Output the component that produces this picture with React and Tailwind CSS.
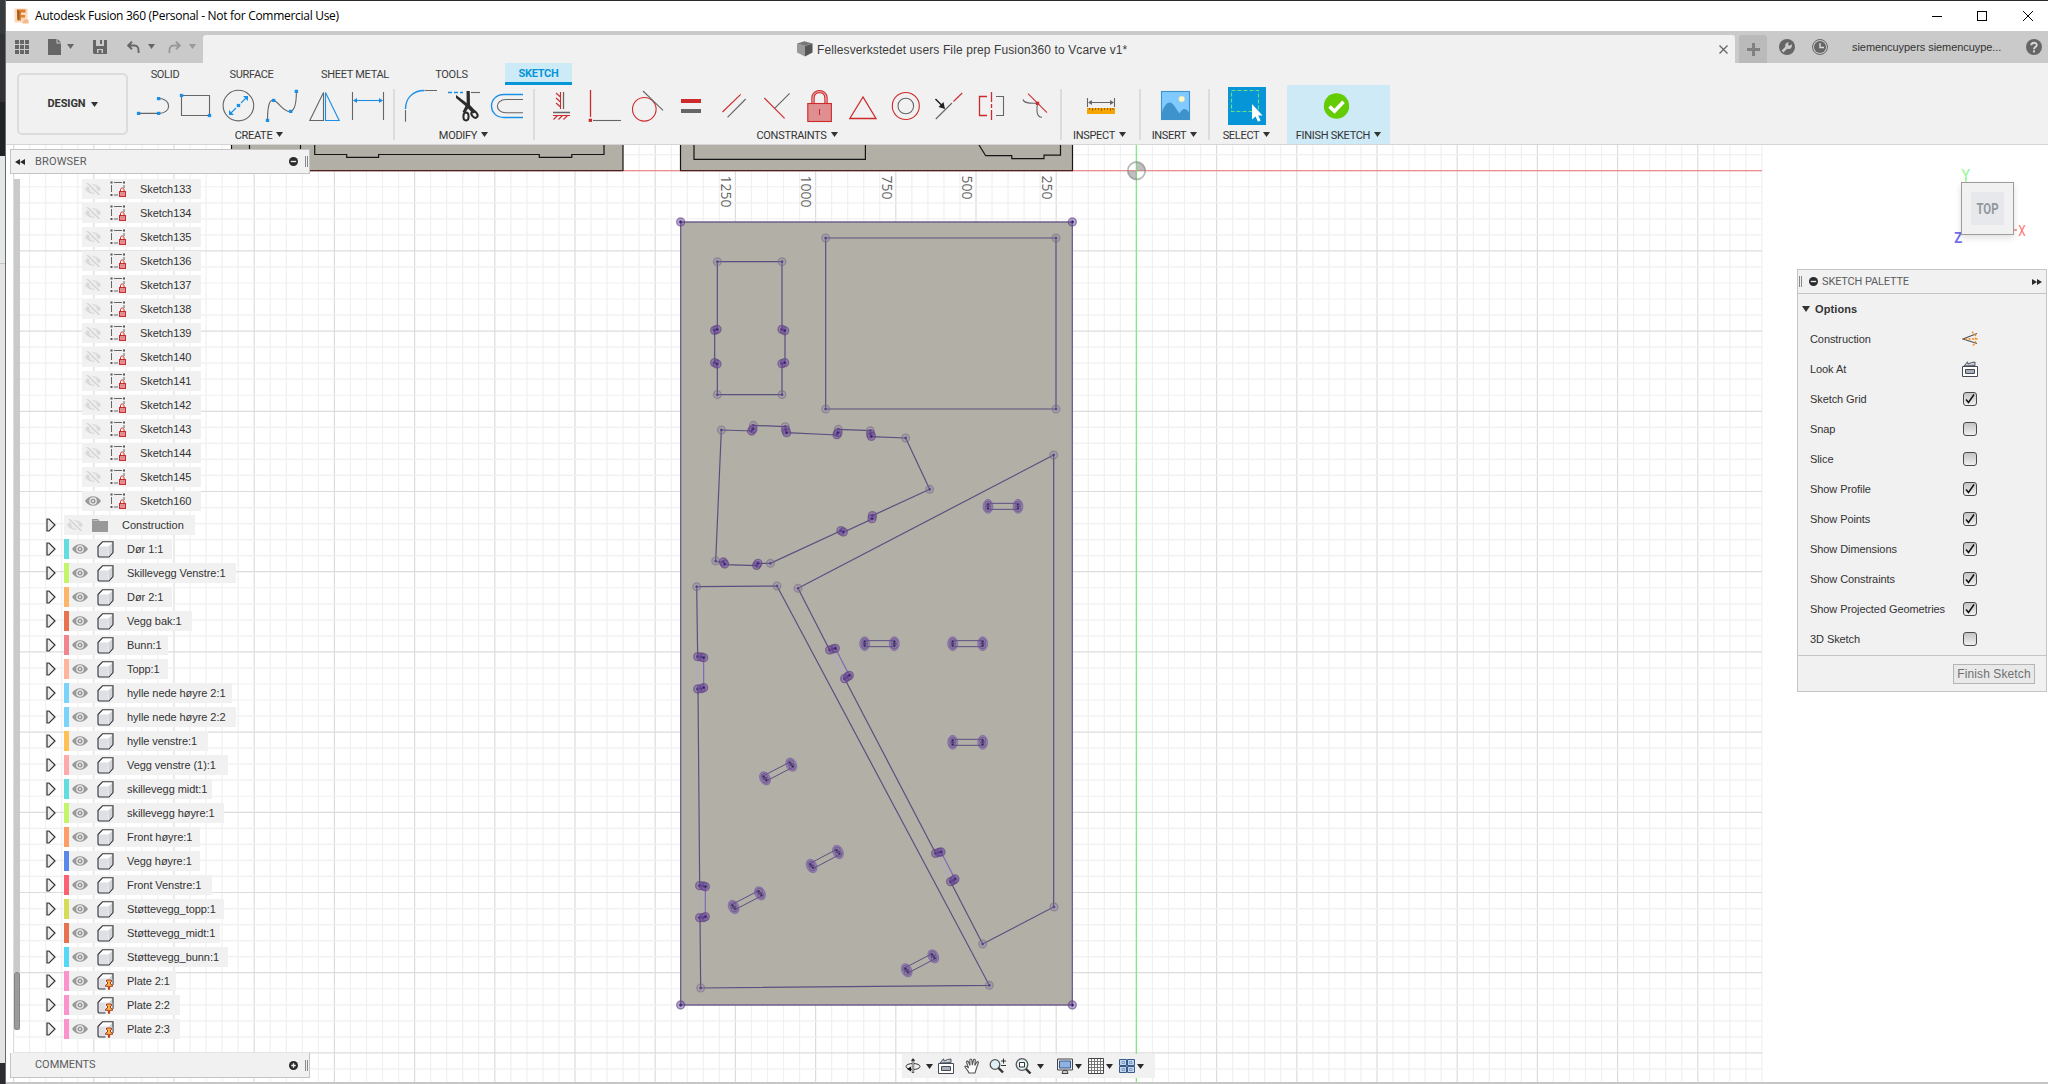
import React from "react";

const GRAY = "#666666";
const BLUE = "#1a8fe8";
const RED = "#cd2a2c";

const Caret = ({ className = "" }) => (
  <svg viewBox="0 0 7 5" className={"h-[5px] w-[7px] shrink-0 " + className}>
    <path d="M0 0H7L3.5 5Z" fill="currentColor" />
  </svg>
);

/* Ribbon icons share one coordinate system; x is the left edge of the cell. */
const Icon = ({ x, w = 43, children }) => (
  <svg
    viewBox={`${x} 86 ${w} 40`}
    width={w}
    height={40}
    className="shrink-0"
    fill="none"
    stroke={GRAY}
    strokeWidth="1.1"
  >
    {children}
  </svg>
);

const Knot = ({ x, y, c = BLUE }) => (
  <rect x={x - 1.7} y={y - 1.6} width="3.4" height="3.2" fill={c} stroke="none" />
);

const createIcons = (
  <>
    <Icon x={131}>
      <path d="M138.6 113.4H158.6C172 113.4 172 98.5 158.6 98.5" />
      <Knot x={138.6} y={113.4} />
      <Knot x={158.6} y={113.4} />
      <Knot x={158.6} y={98.6} />
    </Icon>
    <Icon x={174}>
      <path d="M181.5 95.5H209.5V115.5H181.5Z" />
      <Knot x={181.5} y={95.5} />
      <Knot x={209.5} y={115.5} />
    </Icon>
    <Icon x={217}>
      <circle cx="238.4" cy="105.6" r="15.3" />
      <path d="M229.5 114.5L236 108M241 103L247.5 96.5" stroke={BLUE} />
      <path d="M248 96V101L243 96ZM229 115V110L234 115Z" fill={BLUE} stroke="none" />
      <Knot x={238.5} y={105.5} />
    </Icon>
    <Icon x={260}>
      <path d="M267.5 120.4C267.5 106 269.5 99 273.6 100.4C279 102 284 113 290.7 111.4C295 110 296.4 100 296.4 91.4" />
      <Knot x={267.5} y={120.4} />
      <Knot x={273.6} y={100.4} />
      <Knot x={290.7} y={111.4} />
      <Knot x={296.4} y={91.4} />
    </Icon>
    <Icon x={303}>
      <path d="M309.8 120.5H323.5V92.5Z" />
      <path d="M339.2 120.5H325.5V92.5Z" stroke={BLUE} />
    </Icon>
    <Icon x={346}>
      <path d="M352.5 92V120M383.5 92V120" />
      <path d="M355 100.5H381" stroke={BLUE} />
      <path d="M353 100.5L357 98V103ZM383 100.5L379 98V103Z" fill={BLUE} stroke="none" />
    </Icon>
  </>
);

const modifyIcons = (
  <>
    <Icon x={401}>
      <path d="M406.5 121.7V110M426 90.5H438" />
      <path d="M406.5 109C406.5 98 414 90.5 425.5 90.5" stroke={BLUE} strokeWidth="1.4" />
    </Icon>
    <Icon x={444}>
      <path d="M449 92.5H464" stroke={BLUE} strokeWidth="1.3" strokeDasharray="4 2" />
      <path d="M472 92.5H481" />
      <path d="M467.500 91H470.800L471 105L477.500 112L474 113.500L469 108.500L466 113L463.500 112L466.500 106L457 98V95L467.700 103Z" fill="#2b2b2b" stroke="none" />
      <ellipse cx="467" cy="116.500" rx="2.600" ry="3.900" stroke="#2b2b2b" strokeWidth="2" />
      <ellipse cx="475.500" cy="114.500" rx="2.600" ry="3.600" stroke="#2b2b2b" strokeWidth="2" transform="rotate(-40 475.500 114.500)" />
    </Icon>
    <Icon x={487}>
      <path d="M524 94.5H505C488.3 94.5 488.3 117.5 505 117.5H524" stroke={BLUE} strokeWidth="1.3" />
      <path d="M524 99.5H507C495.5 99.5 495.5 112.7 507 112.7H524" />
    </Icon>
  </>
);

const constraintIcons = (
  <>
    <Icon x={540}>
      <path d="M563.5 92V109M553 112.5H570" strokeWidth="1.3" />
      <path
        d="M560.5 92V109M560.5 97L556 93M560.5 102L556 98M560.5 107L556 103M553 115.5H570M557.5 115.5L553.5 119.5M562.5 115.5L558.5 119.5M567.5 115.5L563.5 119.5"
        stroke={RED}
      />
    </Icon>
    <Icon x={583}>
      <path d="M590.5 90V117" stroke={RED} strokeWidth="1.3" />
      <path d="M593 120.5H621" />
      <Knot x={590.4} y={120.3} c={RED} />
    </Icon>
    <Icon x={626}>
      <circle cx="644.3" cy="109.3" r="11.8" stroke={RED} />
      <path d="M643 91L663 110.3" />
    </Icon>
    <Icon x={669}>
      <path d="M681 99H701V103H681Z" fill={RED} stroke="none" />
      <path d="M681 109H701V113H681Z" fill={GRAY} stroke="none" />
    </Icon>
    <Icon x={712}>
      <path d="M722.5 112L740.7 94.3" stroke={RED} />
      <path d="M727.5 117.3L745.7 99" />
    </Icon>
    <Icon x={755}>
      <path d="M764.3 98L784.6 118.3" stroke={RED} />
      <path d="M774.6 108.3L789.6 93.3" />
    </Icon>
    <Icon x={798}>
      <path
        d="M813 103V98C813 89.5 826 89.5 826 98V103"
        stroke={RED}
        strokeWidth="3.4"
      />
      <path d="M813 103V98C813 89.5 826 89.5 826 98V103" stroke="#e6a3a3" strokeWidth="1.4" />
      <rect x="807.8" y="103.5" width="23.6" height="18" fill="#df8f8f" stroke={RED} />
      <path d="M819.5 109V115" stroke={RED} />
    </Icon>
    <Icon x={841}>
      <path d="M863 97L849.8 118.5H876Z" stroke={RED} strokeWidth="1.3" />
    </Icon>
    <Icon x={884}>
      <circle cx="905.8" cy="106" r="13.5" stroke={RED} />
      <circle cx="905.8" cy="106" r="7.8" />
    </Icon>
    <Icon x={927}>
      <path d="M962.2 93L953.5 101.5" stroke={RED} />
      <path d="M952 103L935.8 119" />
      <path d="M935.5 99L942 105.5" stroke="#222" strokeWidth="1.5" />
      <path d="M945 109L938.5 107L943.5 102Z" fill="#222" stroke="none" />
    </Icon>
    <Icon x={970}>
      <path d="M987 96.5H979.5V115.5H987" stroke={RED} strokeWidth="1.3" />
      <path d="M991.5 92V102M991.5 104V108M991.5 110V120" stroke={RED} strokeWidth="1.3" />
      <path d="M996 96.5H1003.5V115.5H996" />
    </Icon>
    <Icon x={1013}>
      <path d="M1023 99.3C1024 104 1032 103 1037.5 103.3C1036.5 109 1036 117 1042 117.3" />
      <path d="M1028 93.7L1047 112.7" stroke={RED} />
      <Knot x={1037.5} y={103.3} c={RED} />
    </Icon>
  </>
);

const inspectIcon = (
  <Icon x={1079}>
    <path d="M1087.5 98V107M1114.5 98V107M1089 102.5H1113" />
    <path d="M1088 102.5L1092 100V105ZM1114 102.5L1110 100V105Z" fill={GRAY} stroke="none" />
    <rect x="1087" y="108" width="28" height="6" fill="#f7a600" stroke="none" />
    <path
      d="M1089.5 108V110M1092.5 108V111M1095.5 108V110M1098.5 108V110M1101.5 108V111M1104.5 108V110M1107.5 108V110M1110.5 108V111M1113 108V110"
      stroke="#7a5300"
      strokeWidth=".8"
    />
  </Icon>
);

const insertIcon = (
  <Icon x={1153}>
    <rect x="1160.5" y="91.5" width="28" height="28" fill="#80caff" stroke="#3f93cc" />
    <circle cx="1180.7" cy="99" r="3" fill="#fdf9c8" stroke="#c9d9b0" strokeWidth=".6" />
    <path d="M1161 112C1165 101 1170 100 1174 107L1178.500 113.500C1181.500 107.500 1185 107.500 1188.500 113V120H1161Z" fill="#3f93cc" stroke="none" />
  </Icon>
);

const selectIcon = (
  <Icon x={1226}>
    <rect x="1228" y="87" width="38" height="38" fill="#0696d7" stroke="none" />
    <rect x="1231.500" y="90.500" width="27" height="21" stroke="#6fdc82" strokeDasharray="4 2" />
    <path d="M1252 104V119.500L1255.600 116.500L1258 121.800L1260.600 120.600L1258.200 115.500H1262.500Z" fill="#fff" stroke="none" />
  </Icon>
);

const finishIcon = (
  <Icon x={1317}>
    <circle cx="1335.500" cy="106" r="12.700" fill="#64cc04" stroke="none" />
    <path d="M1328.500 106.500L1333.500 111.300L1342.500 101.800" stroke="#fff" strokeWidth="3.600" />
  </Icon>
);

const Group = ({ label, className, children }) => (
  <div className={"flex h-[59px] shrink-0 flex-col items-center pt-px " + className}>
    <div className="flex">{children}</div>
    <div className="mr-[2px] flex items-center gap-1 pt-px font-[Roboto] text-[11px] leading-[18px] tracking-[-0.3px] text-[#333]">
      {label}
      <Caret className="mb-[3px]" />
    </div>
  </div>
);

const Divider = ({ className = "" }) => (
  <div className={"mt-[4px] h-[51px] w-[2px] shrink-0 bg-[#dcdcdc] " + className} />
);

const Tab = ({ className, children }) => (
  <div className={"flex h-[22px] shrink-0 items-center justify-center " + className}>{children}</div>
);

const TitleBar = () => (
  <div className="flex h-[31px] shrink-0 items-center border-t border-[#2b2b2f] bg-white pl-[8px]">
    <svg viewBox="0 0 16 16" className="size-[16px]">
      <rect x=".5" y=".5" width="13" height="14" fill="#fbd9bd" />
      <path d="M10 11.500H14.500V15.500H8.500V13.500H10Z" fill="#f6b98a" />
      <path d="M3 1.500H11.500V4.500H7V7H11V9.500H7V12.500H3.500Z" fill="#d9812f" />
      <path d="M3 1.500L5.500 3V11L3.500 12.500Z" fill="#a85a1c" />
    </svg>
    <div className="ml-[5px] font-['Open_Sans'] text-[12px] tracking-[-0.29px] text-black">
      Autodesk Fusion 360 (Personal - Not for Commercial Use)
    </div>
    <svg viewBox="0 0 102 12" className="mr-[14px] ml-auto h-[12px] w-[102px]" fill="none" stroke="#000">
      <path d="M0 6.500H10" />
      <rect x="45.500" y="1.500" width="9" height="9" />
      <path d="M91 1L101 11M101 1L91 11" />
    </svg>
  </div>
);

const AppBar = () => (
  <div className="flex h-[32px] shrink-0 bg-[#cacaca] text-[#666]">
    <div className="flex w-[197px] shrink-0 items-center pl-[9px]">
      <svg viewBox="0 0 14 14" className="size-[14px]" fill="currentColor">
        <path d="M0 0h4v4H0zM5 0h4v4H5zM10 0h4v4h-4zM0 5h4v4H0zM5 5h4v4H5zM10 5h4v4h-4zM0 10h4v4H0zM5 10h4v4H5zM10 10h4v4h-4z" />
      </svg>
      <svg viewBox="0 0 13 16" className="ml-[19px] h-[16px] w-[13px]" fill="currentColor">
        <path d="M0 0H8.500V4.500H13V16H0ZM9.500 0L13 3.500H9.500Z" />
      </svg>
      <Caret className="mb-[2px] ml-[6px]" />
      <svg viewBox="0 0 14 14" className="ml-[19px] size-[14px]" fill="currentColor">
        <path fillRule="evenodd" d="M0 0H14V14H1L0 13ZM3 0V6H11V0ZM4 9V13H5.500V10H8.500V13H10V9Z" />
        <path d="M4 0H10V5H4Z" fill="#cacaca" />
        <path d="M7 0H9V4H7Z" />
      </svg>
      <svg viewBox="0 0 13 12" className="ml-[20px] h-[12px] w-[13px]" fill="none" stroke="currentColor" strokeWidth="1.900">
        <path d="M5 .8L1.200 4.500L5 8.200M1.500 4.500H7C11 4.500 11.800 7 11.600 12" />
      </svg>
      <Caret className="mb-[2px] ml-[8px]" />
      <svg viewBox="0 0 13 12" className="ml-[13px] h-[12px] w-[13px] text-[#999]" fill="none" stroke="currentColor" strokeWidth="1.900">
        <path d="M8 .8L11.800 4.500L8 8.200M11.500 4.500H6C2 4.500 1.200 7 1.400 12" />
      </svg>
      <Caret className="mb-[2px] ml-[8px] text-[#999]" />
    </div>
    <div className="mt-[4px] flex w-[1532px] shrink-0 items-center rounded-t-[3px] bg-[#f1f1f1]">
      <svg viewBox="0 0 16 16" className="ml-[594px] size-[16px]">
        <path d="M0 2.500L8 5V15.500L0 11.500Z" fill="#999" />
        <path d="M8 5L15.500 2.500V11.500L8 15.500Z" fill="#555" />
        <path d="M0 2.500L7.500 .3L15.500 2.500L8 5Z" fill="#777" />
      </svg>
      <div className="ml-[4px] pt-px font-['Liberation_Sans'] text-[12px] tracking-[0.11px] text-[#3c3c3c]">
        Fellesverkstedet users File prep Fusion360 to Vcarve v1*
      </div>
      <svg viewBox="0 0 9 9" className="mr-[7px] ml-auto size-[9px]" stroke="#666" strokeWidth="1.300">
        <path d="M.5 .5L8.500 8.500M8.500 .5L.5 8.500" />
      </svg>
    </div>
    <div className="mt-[4px] ml-[4px] flex w-[28px] shrink-0 items-center justify-center rounded-t-[3px] bg-[#bababa]">
      <svg viewBox="0 0 13 13" className="size-[13px]" stroke="#808080" strokeWidth="3">
        <path d="M6.500 0V13M0 6.500H13" />
      </svg>
    </div>
    <svg viewBox="0 0 16 16" className="mt-[8px] ml-[12px] size-[16px] shrink-0">
      <circle cx="8" cy="8" r="8" fill="#666" />
      <path d="M3.500 12.500L8.500 7.500" stroke="#cacaca" strokeWidth="2.600" />
      <path d="M12.700 5.300A3.400 3.400 0 1 1 9.800 3.200L9 5.600L10.300 6.800Z" fill="#cacaca" />
    </svg>
    <svg viewBox="0 0 16 16" className="mt-[8px] ml-[17px] size-[16px] shrink-0">
      <circle cx="8" cy="8" r="7.500" fill="none" stroke="#666" />
      <circle cx="8" cy="8" r="6" fill="#666" />
      <path d="M8 4V8.500H12" fill="none" stroke="#d8d8d8" strokeWidth="1.400" />
    </svg>
    <div className="ml-[24px] w-[174px] pt-[8px] font-['Liberation_Sans'] text-[11px] leading-[16px] tracking-[-0.06px] text-[#333]">
      siemencuypers siemencuype...
    </div>
    <svg viewBox="0 0 16 16" className="mt-[8px] size-[16px] shrink-0">
      <circle cx="8" cy="8" r="8" fill="#666" />
      <path d="M5.300 6.300C5.300 2.900 10.700 2.900 10.700 6.200C10.700 8 8 8.200 8 10.300" fill="none" stroke="#d8d8d8" strokeWidth="1.900" />
      <rect x="7" y="11.400" width="2" height="2" fill="#d8d8d8" />
    </svg>
  </div>
);

const Ribbon = () => (
  <div className="flex h-[82px] shrink-0 border-b border-[#d5d5d5] bg-[#f1f1f1]">
    <div className="mt-[10px] ml-[11px] flex h-[62px] w-[111px] shrink-0 items-center justify-center gap-[5px] rounded-[5px] border-2 border-[#dcdcdc] pt-px font-[Roboto] text-[11px] font-bold tracking-[-0.1px] text-[#333]">
      DESIGN
      <Caret />
    </div>
    <div className="ml-[3px] flex flex-col">
      <div className="flex font-[Roboto] text-[11px] tracking-[-0.3px] text-[#3c3c3c]">
        <Tab className="w-[68px] pt-[2px]">SOLID</Tab>
        <Tab className="w-[105px] pt-[2px]">SURFACE</Tab>
        <Tab className="w-[102px] pt-[2px]">SHEET METAL</Tab>
        <Tab className="w-[91px] pt-[2px]">TOOLS</Tab>
        <Tab className="ml-[8px] w-[67px] border-b-[3px] border-[#0696d7] bg-[#cdebf7] pt-[4px] font-bold text-[#0696d7]">SKETCH</Tab>
      </div>
      <div className="flex">
        <Group label="CREATE" className="w-[258px]">{createIcons}</Group>
        <Divider className="ml-[4px]" />
        <Group label="MODIFY" className="ml-[4px] w-[129px] pl-[2px]">{modifyIcons}</Group>
        <Divider className="ml-[5px]" />
        <Group label="CONSTRAINTS" className="ml-[5px] w-[516px]">{constraintIcons}</Group>
        <Divider className="ml-[4px]" />
        <Group label="INSPECT" className="w-[77px]">{inspectIcon}</Group>
        <Divider />
        <Group label="INSERT" className="w-[67px] pl-[2px]">{insertIcon}</Group>
        <Divider />
        <Group label="SELECT" className="w-[75px]">{selectIcon}</Group>
        <Group label="FINISH SKETCH" className="ml-[2px] w-[103px] bg-[#cdeaf6] pl-[2px]">{finishIcon}</Group>
      </div>
    </div>
  </div>
);

/* ---------- sketch drawing ---------- */

const range = (n) => Array.from({ length: n }, (_, i) => i);
const STEP = 16.04;

const GridLines = () => (
  <g>
    {range(110).map((i) => {
      const x = 1136.4 + (i - 70) * STEP;
      return (
        <path key={i} d={`M${x} 145V1082`} stroke={(i - 70) % 5 === 0 ? "#dcdcdc" : "#f0f0f0"} strokeWidth="1.2" />
      );
    })}
    {range(58).map((i) => {
      const y = 170.7 + (i - 1) * STEP;
      return (
        <path key={i} d={`M13.600 ${y}H1762`} stroke={(i - 1) % 5 === 0 ? "#dcdcdc" : "#f0f0f0"} strokeWidth="1.2" />
      );
    })}
  </g>
);

const Light = ({ p }) => (
  <g>
    <circle cx={p[0]} cy={p[1]} r="11.500" fill="#8c6fb8" fillOpacity=".3" stroke="#6f6878" strokeOpacity=".5" strokeWidth="4" />
    <circle cx={p[0]} cy={p[1]} r="3" fill="#4c4070" />
  </g>
);

const Deep = ({ p }) => (
  <g>
    <circle cx={p[0]} cy={p[1]} r="12" fill="#7c4fb8" fillOpacity=".5" stroke="#5a4575" strokeOpacity=".6" strokeWidth="4" />
    <circle cx={p[0]} cy={p[1]} r="4" fill="#2c1a50" />
  </g>
);

const lightPoints = [
  [497, 114], [1188, 114], [497, 627], [1188, 627],
  [172, 185], [366, 185], [172, 584], [366, 584],
  [184, 690], [280, 676], [376, 680], [535, 688], [631, 692], [737, 714], [809, 868],
  [167, 1083], [331, 1090], [1181, 765],
  [110, 1160], [351, 1158], [414, 1165], [1182, 2121], [968, 2232], [988, 2356], [122, 2364],
];

const deepPoints = [
  [62, 66], [1237, 66], [62, 2415], [1237, 2415],
  [164, 391], [171, 388], [366, 388], [374, 392], [164, 488], [171, 492], [366, 491], [374, 488],
  [275, 693], [279, 687], [377, 690], [380, 698], [531, 704], [534, 698], [632, 702], [634, 709],
  [637, 947], [636, 956], [543, 992], [550, 996],
  [190, 1086], [194, 1092], [290, 1096], [294, 1090],
  [113, 1370], [124, 1371], [131, 1373], [113, 1467], [124, 1466], [131, 1463],
  [119, 2057], [130, 2058], [136, 2060], [119, 2153], [130, 2153], [136, 2150],
  [509, 1350], [519, 1347], [526, 1345], [554, 1436], [563, 1430], [568, 1426],
  [827, 1960], [837, 1957], [843, 1956], [872, 2045], [880, 2041], [885, 2037],
];

/* Each slot: start centre, end centre, half-width vector, rotation. */
const slots = [
  [984, 919, 1074, 919, 0, 9, 0],
  [614, 1331, 703, 1331, 0, 9, 0],
  [878, 1331, 968, 1331, 0, 9, 0],
  [878, 1627, 968, 1627, 0, 9, 0],
  [315, 1735, 394, 1694, 4, 8, -27],
  [455, 1998, 534, 1956, 4, 8, -27],
  [221, 2121, 300, 2080, 4, 8, -27],
  [740, 2311, 820, 2269, 4, 8, -27],
];

const SlotEnd = ({ x, y, dx, dy, angle }) => (
  <g>
    <ellipse
      cx={x}
      cy={y}
      rx="15"
      ry="21"
      transform={`rotate(${angle} ${x} ${y})`}
      fill="#7c58b0"
      fillOpacity=".55"
      stroke="#6d55a0"
      strokeOpacity=".5"
    />
    <circle cx={x - dx * 0.6} cy={y - dy * 0.7} r="9" stroke="#5a4575" strokeOpacity=".6" />
    <circle cx={x + dx * 0.6} cy={y + dy * 0.7} r="9" stroke="#5a4575" strokeOpacity=".6" />
    <circle cx={x - dx} cy={y - dy * 0.7} r="3.500" fill="#2c1a50" />
    <circle cx={x + dx} cy={y + dy * 0.7} r="3.500" fill="#2c1a50" />
    <circle cx={x} cy={y} r="3" fill="#3a2560" />
  </g>
);

const Slot = ({ s: [x1, y1, x2, y2, dx, dy, angle] }) => (
  <g>
    <path d={`M${x1 - dx} ${y1 - dy}L${x2 - dx} ${y2 - dy}M${x1 + dx} ${y1 + dy}L${x2 + dx} ${y2 + dy}`} />
    <SlotEnd x={x1} y={y1} dx={dx} dy={dy} angle={angle} />
    <SlotEnd x={x2} y={y2} dx={dx} dy={dy} angle={angle} />
  </g>
);

const dims = [[726.8, "1250"], [806.8, "1000"], [887, "750"], [967, "500"], [1047.5, "250"]];

const Drawing = () => (
  <svg viewBox="6 145 2042 939" className="block h-[939px] w-[2042px]" fill="none">
    <GridLines />
    <path d="M13.600 170.700H1762" stroke="#ee8d8d" strokeWidth="1.300" />

    <path d="M231.500 145H623V171H231.500Z" fill="#b2afa7" />
    <path d="M680.500 145H1072.500V171H680.500Z" fill="#b2afa7" />
    <g stroke="#151515" strokeWidth="1.200">
      <path d="M231.500 145V171M249.500 145V171M300.500 145V152M314.700 145V154.500H346.700V157.300H378.600V154.500H539.300V157.300H571.800V154.500H604V145M623 145V171" />
      <path d="M680.500 145V171M694 145V159.300H865.400V145M979 145L985.700 155.700H1011.800V158.600H1044V155.200H1060.500V145M1072.500 145V171" />
      <path d="M231 170.700H623M680 170.700H1073" stroke="#4a2220" strokeWidth="1.300" />
    </g>

    <path d="M1136.400 145V1082" stroke="#82ea82" strokeWidth="1.300" />
    <g>
      <circle cx="1136.500" cy="170.700" r="8.700" stroke="#8a8a8a" strokeOpacity=".6" strokeWidth="1.800" />
      <path d="M1136.500 170.700V161.700A9 9 0 0 1 1145.500 170.700ZM1136.500 170.700V179.700A9 9 0 0 1 1127.500 170.700Z" fill="#8a8a8a" fillOpacity=".55" />
    </g>

    <g fill="#666" className="font-['Open_Sans'] text-[15px]">
      {dims.map(([x, t]) => (
        <text key={t} transform={`translate(${x - 5.5} 175.500) rotate(90)`} textLength={t.length * 8} lengthAdjust="spacingAndGlyphs">{t}</text>
      ))}
    </g>

    <g transform="translate(660 200) scale(.33333)" stroke="#5b4f80" strokeWidth="3.600">
      <path d="M62 66H1237V2415H62Z" fill="#b2afa7" stroke="#6f6090" strokeWidth="4" />
      <path d="M497 114H1188V627H497Z" />
      <path d="M172 185H366V388H375V490H366V584H172V490H164V388H172Z" />
      <path d="M184 690L277 693L280 676L376 680L379 698L532 705L535 688L631 692L634 710L737 714L809 868L637 947L636 957L550 997L543 992L331 1090H294L290 1097L194 1094L190 1085H167Z" />
      <path d="M414 1165L1181 765V2121L968 2232L874 2050M827 1960L556 1440M509 1350L414 1165" />
      <path d="M351 1158L110 1160L113 1370M114 1467L119 2057M120 2153L122 2364L988 2356L351 1158" />
      <path d="M131 1373V1463M136 2060V2150M526 1345L568 1426M843 1956L885 2037" stroke="#8068b8" />
      <path d="M113 1373V1463M120 2060V2150M511 1350L554 1436M830 1960L872 2045" stroke="#b0a8c8" />
      <g strokeWidth="3">
        {slots.map((s, i) => <Slot key={i} s={s} />)}
        {lightPoints.map((p, i) => <Light key={i} p={p} />)}
        {deepPoints.map((p, i) => <Deep key={i} p={p} />)}
      </g>
    </g>
  </svg>
);

/* ---------- browser tree ---------- */

const Eye = () => (
  <svg viewBox="0 0 16 12" className="h-[12px] w-[16px] shrink-0">
    <path d="M0 6C3.500 -.3 12.500 -.3 16 6C12.500 12.300 3.500 12.300 0 6Z" fill="#999" />
    <circle cx="8" cy="6" r="3.200" fill="#999" stroke="#f1f1f1" strokeWidth="1.200" />
    <circle cx="8" cy="6" r="1" fill="#f1f1f1" />
  </svg>
);

const EyeOff = () => (
  <svg viewBox="0 0 16 12" className="h-[12px] w-[16px] shrink-0">
    <path d="M0 6C3.500 -.3 12.500 -.3 16 6C12.500 12.300 3.500 12.300 0 6Z" fill="#d9d9d9" />
    <circle cx="8" cy="6" r="3" fill="#d9d9d9" stroke="#f1f1f1" strokeWidth="1.200" />
    <path d="M2.500 0L14.500 12" stroke="#f1f1f1" strokeWidth="4" />
    <path d="M2 0L14.500 12" stroke="#d4d4d4" strokeWidth="1.500" />
  </svg>
);

const SketchIcon = () => (
  <svg viewBox="0 0 16 16" className="h-[16px] w-[16px] shrink-0" fill="none" stroke="#666">
    <path d="M1.500 4V11M4 1.500H12M14 4V7M4 14H8" />
    <path d="M.5 .5h2v2h-2zM13 .5h2v2h-2zM.5 13h2v2h-2z" fill="#555" stroke="none" />
    <path d="M10.500 10V8.500C10.500 6.500 14 6.500 14 8.500V10" stroke={RED} />
    <rect x="9.500" y="10.500" width="6" height="5" fill="#df8f8f" stroke={RED} />
  </svg>
);

const Cube = ({ pinned }) => (
  <svg viewBox="0 0 17 17" className="size-[17px] shrink-0">
    <path d="M1 5.500L5 1H16V12L12 16H3L1 14.500Z" fill="#fff" />
    <path d="M1 5.500H11.500V16H3L1 14.500Z" fill="#dfe0e6" />
    <path d="M11.500 5.500L16 1V12L12 16Z" fill="#d3d4da" />
    <path d="M1 5.500L5.500 .8H16V11.500L12 16H2L1 15Z" fill="none" stroke="#33343a" strokeWidth="1.100" />
    {pinned && (
      <>
        <path d="M8.500 6H15.300V12H17V17H8.500Z" fill="#f1f1f1" />
        <path d="M9.500 7H14.500V8.500L13.500 9V11L15.500 12.300V13.300H12.600V16.300H11.400V13.300H8.500V12.300L10.500 11V9L9.500 8.500Z" fill="#f4b94a" stroke="#b03018" />
      </>
    )}
  </svg>
);

const Folder = () => (
  <svg viewBox="0 0 16 13" className="h-[13px] w-[16px] shrink-0" fill="#999">
    <path d="M0 0H6L7.500 2H16V13H0Z" />
    <path d="M1 1.500H6" stroke="#c9c9c9" strokeWidth=".8" />
  </svg>
);

const Arrow = () => (
  <svg viewBox="0 0 10 14" className="h-[14px] w-[10px] shrink-0" fill="#ececec" stroke="#333" strokeWidth="1.200">
    <path d="M1 1H3L9 7L3 13H1Z" />
  </svg>
);

const hiddenSketches = ["133", "134", "135", "136", "137", "138", "139", "140", "141", "142", "143", "144", "145"];

const components = [
  ["Dør 1:1", "bg-[#62dce0]", "w-[108px]"],
  ["Skillevegg Venstre:1", "bg-[#c4f569]", "w-[172px]"],
  ["Dør 2:1", "bg-[#fdb56a]", "w-[108px]"],
  ["Vegg bak:1", "bg-[#e8724e]", "w-[128px]"],
  ["Bunn:1", "bg-[#f28490]", "w-[104px]"],
  ["Topp:1", "bg-[#ffb59c]", "w-[104px]"],
  ["hylle nede høyre 2:1", "bg-[#7ad3fb]", "w-[168px]"],
  ["hylle nede høyre 2:2", "bg-[#7ad3fb]", "w-[172px]"],
  ["hylle venstre:1", "bg-[#ffc055]", "w-[144px]"],
  ["Vegg venstre (1):1", "bg-[#ffa9ac]", "w-[164px]"],
  ["skillevegg midt:1", "bg-[#62dce0]", "w-[148px]"],
  ["skillevegg høyre:1", "bg-[#c4f569]", "w-[160px]"],
  ["Front høyre:1", "bg-[#ff9d66]", "w-[136px]"],
  ["Vegg høyre:1", "bg-[#5a88ea]", "w-[136px]"],
  ["Front Venstre:1", "bg-[#fd6072]", "w-[148px]"],
  ["Støttevegg_topp:1", "bg-[#d5dd57]", "w-[160px]"],
  ["Støttevegg_midt:1", "bg-[#e8724e]", "w-[156px]"],
  ["Støttevegg_bunn:1", "bg-[#55d7f8]", "w-[164px]"],
  ["Plate 2:1", "bg-[#fb92cc]", "w-[112px]", true],
  ["Plate 2:2", "bg-[#fb92cc]", "w-[116px]", true],
  ["Plate 2:3", "bg-[#fb92cc]", "w-[116px]", true],
];

const SketchRow = ({ name, visible }) => (
  <div className="ml-[62px] flex h-[20px] w-[119px] shrink-0 items-center bg-[#f1f1f1] pl-[3px]">
    {visible ? <Eye /> : <EyeOff />}
    <div className="ml-[9px]"><SketchIcon /></div>
    <div className="ml-[14px] tracking-[-0.08px]">{name}</div>
  </div>
);

const Tree = () => (
  <div className="flex">
    <div className="flex h-[851px] w-[6px] flex-col justify-end bg-[#c8cacb]">
      <div className="h-[58px] rounded-[3px] border border-[#858585] bg-[#9b9b9b]" />
    </div>
    <div className="flex flex-col gap-[4px] font-['Liberation_Sans'] text-[11px] leading-[20px] whitespace-nowrap text-[#333]">
      {hiddenSketches.map((n) => <SketchRow key={n} name={"Sketch" + n} />)}
      <SketchRow name="Sketch160" visible />
      <div className="ml-[26px] flex h-[20px] items-center gap-[8px]">
        <Arrow />
        <div className="flex h-[20px] w-[131px] items-center bg-[#f1f1f1] pl-[3px]">
          <EyeOff />
          <div className="ml-[9px]"><Folder /></div>
          <div className="ml-[14px]">Construction</div>
        </div>
      </div>
      {components.map(([name, color, width, pinned]) => (
        <div key={name} className="ml-[26px] flex h-[20px] items-center gap-[8px]">
          <Arrow />
          <div className={"flex h-[20px] items-center bg-[#f1f1f1] " + width}>
            <div className={"h-[20px] w-[5px] " + color} />
            <div className="ml-[3px]"><Eye /></div>
            <div className="ml-[9px]"><Cube pinned={pinned} /></div>
            <div className="ml-[13px] tracking-[-0.06px]">{name}</div>
          </div>
        </div>
      ))}
    </div>
  </div>
);

const RoundButton = ({ plus }) => (
  <svg viewBox="0 0 10 10" className="size-[9px] shrink-0">
    <circle cx="5" cy="5" r="5" fill="#2b2b2b" />
    <path d={plus ? "M2.500 5H7.500M5 2.500V7.500" : "M2 5H8"} stroke="#f1f1f1" strokeWidth="1.500" />
  </svg>
);

const Grip = () => <div className="h-[11px] w-[3px] shrink-0 border-x border-[#888]" />;

const DoubleArrow = ({ right }) => (
  <svg viewBox="0 0 10 6" className={"h-[6px] w-[10px] shrink-0 " + (right ? "rotate-180" : "")} fill="#2b2b2b">
    <path d="M5 0V6L0 3ZM10 0V6L5 3Z" />
  </svg>
);

/* ---------- sketch palette ---------- */

const Checkbox = ({ checked }) => (
  <div className="flex size-[14px] items-center justify-center rounded-[3px] border border-[#4a4a4a] bg-linear-to-b from-[#c4c4c4] to-[#f0f0f0]">
    {checked && (
      <svg viewBox="0 0 12 12" className="size-[12px]" fill="none" stroke="#111" strokeWidth="1.500">
        <path d="M2 6.500L4.500 9.500L10 1.500" />
      </svg>
    )}
  </div>
);

const LookAt = () => (
  <svg viewBox="0 0 16 16" className="size-[16px]" fill="none" stroke="#444b57">
    <path d="M.5 5.500H15.500V15.500H.5Z" fill="#fff" />
    <path d="M3.500 8.500H12.500V12.500H3.500Z" fill="#aab0bb" />
    <path d="M2 5L5.500 .8L6 3L9.500 1.500L13 1V4.500Z" fill="#c5c9d0" strokeWidth=".9" />
  </svg>
);

const ConstructionIcon = () => (
  <svg viewBox="0 0 16 16" className="size-[16px]" fill="none">
    <path d="M15 2.500L1 8L15 12.500" stroke="#555" strokeWidth="1.300" />
    <path d="M3 8H15.500M10 .8L13.500 4.500V12L10 15.500" stroke="#f08c1e" strokeWidth="1.300" strokeDasharray="2.200 1.300" />
  </svg>
);

const options = [
  ["Construction", <ConstructionIcon key="c" />],
  ["Look At", <LookAt key="l" />],
  ["Sketch Grid", <Checkbox key="k" checked />],
  ["Snap", <Checkbox key="k" />],
  ["Slice", <Checkbox key="k" />],
  ["Show Profile", <Checkbox key="k" checked />],
  ["Show Points", <Checkbox key="k" checked />],
  ["Show Dimensions", <Checkbox key="k" checked />],
  ["Show Constraints", <Checkbox key="k" checked />],
  ["Show Projected Geometries", <Checkbox key="k" checked />],
  ["3D Sketch", <Checkbox key="k" />],
];

const Palette = () => (
  <div className="absolute top-[124px] left-[1791px] flex h-[423px] w-[250px] flex-col border border-[#c4c4c4] bg-[#f1f1f1] font-['Liberation_Sans'] text-[11px] text-[#333]">
    <div className="flex h-[24px] items-center border-b border-[#c4c4c4] pr-[4px] pl-px">
      <Grip />
      <div className="ml-[7px]"><RoundButton /></div>
      <div className="ml-[4px] pt-[2px] font-[Roboto] tracking-[-0.15px] text-[#5c5c5c]">SKETCH PALETTE</div>
      <div className="mt-px ml-auto"><DoubleArrow right /></div>
    </div>
    <div className="flex h-[30px] items-center gap-[5px] pl-[4px] font-bold">
      <svg viewBox="0 0 8 6" className="h-[6px] w-[8px]"><path d="M0 0H8L4 6Z" fill="#333" /></svg>
      <div className="tracking-[0.1px]">Options</div>
    </div>
    {options.map(([name, control]) => (
      <div key={name} className="flex h-[30px] shrink-0 items-center pl-[12px]">
        <div className="w-[150px] tracking-[-0.08px]">{name}</div>
        <div className="flex w-[20px] justify-center">{control}</div>
      </div>
    ))}
    <div className="mt-px flex flex-1 items-center justify-end border-t border-[#c4c4c4] pt-px pr-[11px]">
      <div className="flex h-[20px] w-[82px] items-center justify-center border border-[#b5b5b5] bg-[#e9e9e9] text-[12px] tracking-[0.1px] text-[#707070]">
        Finish Sketch
      </div>
    </div>
  </div>
);

const ViewCube = () => (
  <svg viewBox="1945 160 90 90" className="absolute top-[15px] left-[1939px] size-[90px]">
    <path d="M1966 178V183" stroke="#9dff9d" strokeWidth="1.500" />
    <path d="M2014 230H2017" stroke="#ff7d7d" strokeWidth="1.500" />
    <g className="font-[Roboto] text-[14px]" textAnchor="middle">
      <text x="1965.700" y="180" fill="#8dfa8d">Y</text>
      <text x="2022" y="235.500" fill="#ff7474" textLength="7.500" lengthAdjust="spacingAndGlyphs">X</text>
      <text x="1958.300" y="242.500" fill="#6f6ff5" textLength="8" lengthAdjust="spacingAndGlyphs" className="font-bold">Z</text>
    </g>
    <rect x="1961.500" y="182.500" width="52" height="52" fill="#f1f1f1" stroke="#9d9d9d" className="drop-shadow-md" />
    <rect x="1971" y="192" width="33" height="33" fill="#e6e8eb" />
    <text x="1987.500" y="213.500" textAnchor="middle" fill="#92979c" textLength="22" lengthAdjust="spacingAndGlyphs" className="font-[Roboto] text-[14px] font-bold">TOP</text>
  </svg>
);

const NavBar = () => (
  <div className="absolute top-[909px] left-[896px] flex h-[24px] w-[253px] items-center bg-[#f1f1f1] pl-[3px] text-[#2b2b2b]">
    <svg viewBox="0 0 16 16" className="size-[16px]" fill="none" stroke="#333">
      <ellipse cx="8" cy="8.500" rx="7" ry="3" />
      <path d="M8 1V15" stroke="#555" strokeWidth="2.400" />
      <path d="M8 2V14" stroke="#fff" strokeWidth=".8" />
      <path d="M8 0L10 3H6Z" fill="#333" stroke="none" />
      <path d="M2 11L6 8.500V13.500Z" fill="#111" stroke="none" />
    </svg>
    <Caret className="ml-[5px] w-[6px]" />
    <div className="ml-[5px]"><LookAt /></div>
    <svg viewBox="0 0 16 16" className="ml-[10px] size-[16px]" fill="#fff" stroke="#555" strokeWidth="1.100">
      <path d="M5 15C4 12 1 10 .8 8.500C1.500 7.500 3 8.500 4.500 10L2.500 4C2.500 2.800 4 2.800 4.500 4L6 7.500L5.800 2C6 .6 7.600 .6 7.800 2L8.300 7L9.500 2C10 .9 11.400 1.200 11.300 2.500L10.800 7.500L12.800 4C13.600 3.200 14.800 3.800 14.300 5L12.500 10C12 12 11.500 13 11 15Z" />
    </svg>
    <svg viewBox="0 0 17 16" className="ml-[9px] h-[16px] w-[17px]" fill="none" stroke="#555">
      <circle cx="6" cy="6.500" r="4.800" fill="#dff0f4" strokeWidth="1.300" />
      <path d="M9.500 10L14 14.500" stroke="#333" strokeWidth="2.400" />
      <path d="M14.500 .5V5.500M12 3H17M12 7.500H17" stroke="#333" />
    </svg>
    <svg viewBox="0 0 17 16" className="ml-[9px] h-[16px] w-[17px]" fill="none" stroke="#555">
      <circle cx="7" cy="6.500" r="5.800" fill="#dff0f4" strokeWidth="1.300" />
      <path d="M4.500 4.500H9.500V9H4.500Z" fill="#fff" stroke="#333" />
      <path d="M11 11L15.500 15.500" stroke="#333" strokeWidth="2.400" />
    </svg>
    <Caret className="ml-[5px] w-[6px]" />
    <svg viewBox="0 0 16 16" className="ml-[13px] size-[16px]" fill="none" stroke="#444">
      <path d="M.5 1H15.500V12H.5Z" fill="#e8eaee" />
      <path d="M2.500 3H13.500V10H2.500Z" fill="#8fb2e0" stroke="#355a90" />
      <path d="M5 15.500H11L10 12.500H6Z" fill="#ccc" />
    </svg>
    <Caret className="ml-[2px] w-[6px]" />
    <svg viewBox="0 0 16 16" className="ml-[6px] size-[16px]" fill="#fff" stroke="#777">
      <path d="M.5 .5H15.500V15.500H.5Z" stroke="#444" />
      <path d="M3.500 1V15M6.500 1V15M9.500 1V15M12.500 1V15M1 3.500H15M1 6.500H15M1 9.500H15M1 12.500H15" />
    </svg>
    <Caret className="ml-[2px] w-[6px]" />
    <svg viewBox="0 0 16 14" className="ml-[6px] h-[14px] w-[16px]" fill="#c2d6ef" stroke="#3a5a86">
      <path d="M.5 .5H7.500V6.500H.5ZM8.500 .5H15.500V6.500H8.500ZM.5 7.500H7.500V13.500H.5ZM8.500 7.500H15.500V13.500H8.500Z" />
      <path d="M3 2.500H5.500V4.500H3ZM10.500 2.500H13V4.500H10.500ZM3 9.500H5.500V11.500H3ZM10.500 9.500H13V11.500H10.500Z" stroke="#6d8fbd" strokeWidth=".8" />
    </svg>
    <Caret className="ml-[2px] w-[6px]" />
  </div>
);

export default function App() {
  return (
    <div className="flex h-[1084px] w-[2048px] overflow-hidden bg-white">
      <div className="flex w-[6px] shrink-0 flex-col border-r border-[#6b6b6b]">
        <div className="h-[34px] bg-[#363b3e]" />
        <div className="h-[68px] bg-[#313235]" />
        <div className="h-[54px] bg-[#1f2226]" />
        <div className="h-[108px] border-b border-[#c4c4c4] bg-[#e4e7e7]" />
        <div className="flex-1 bg-[#e4e4e6]" />
        <div className="h-[21px] bg-[#2c2c31]" />
      </div>
      <div className="flex w-[2042px] flex-col">
        <TitleBar />
        <AppBar />
        <Ribbon />
        <div className="relative flex-1">
          <Drawing />
          <div className="absolute top-[4px] left-[4px] flex flex-col">
            <div className="flex h-[25px] w-[300px] items-center border border-[#c4c4c4] bg-[#f1f1f1] pr-px pl-[4px] font-[Roboto] text-[11px] tracking-[0.15px] text-[#5c5c5c]">
              <DoubleArrow />
              <div className="ml-[10px] pt-[2px]">BROWSER</div>
              <div className="mr-[7px] ml-auto"><RoundButton /></div>
              <Grip />
            </div>
            <div className="mt-[5px] ml-[4px]"><Tree /></div>
          </div>
          <div className="absolute top-[908px] left-[4px] flex h-[25px] w-[300px] items-center border border-t-0 border-[#c4c4c4] bg-[#f1f1f1] pr-px pl-[24px] font-[Roboto] text-[11px] tracking-[-0.05px] text-[#5c5c5c]">
            <div className="pt-px">COMMENTS</div>
            <div className="mr-[7px] ml-auto"><RoundButton plus /></div>
            <Grip />
          </div>
          <ViewCube />
          <Palette />
          <NavBar />
          <div className="absolute bottom-0 left-0 h-[2px] w-full bg-[#c6c6c6]" />
        </div>
      </div>
    </div>
  );
}
